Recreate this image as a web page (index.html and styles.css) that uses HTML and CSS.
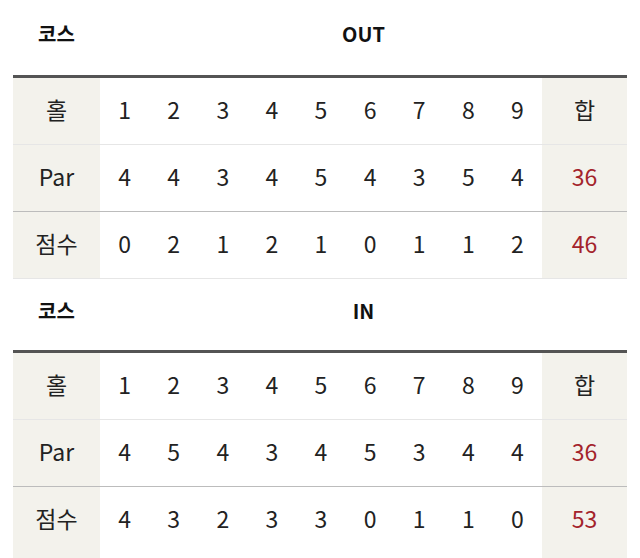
FILE: index.html
```html
<!DOCTYPE html>
<html lang="ko">
<head>
<meta charset="utf-8">
<link rel="stylesheet" href="styles.css">
</head>
<body>
<div class="page">
  <section class="course">
    <div class="course-head">
      <div class="course-label">코스</div>
      <div class="course-name">OUT</div>
    </div>
    <table class="score">
      <colgroup><col class="c-label"><col span="9" class="c-num"><col class="c-sum"></colgroup>
      <tr class="r-hole"><th>홀</th><td>1</td><td>2</td><td>3</td><td>4</td><td>5</td><td>6</td><td>7</td><td>8</td><td>9</td><th>합</th></tr>
      <tr class="r-par"><th>Par</th><td>4</td><td>4</td><td>3</td><td>4</td><td>5</td><td>4</td><td>3</td><td>5</td><td>4</td><th class="sum">36</th></tr>
      <tr class="r-score"><th>점수</th><td>0</td><td>2</td><td>1</td><td>2</td><td>1</td><td>0</td><td>1</td><td>1</td><td>2</td><th class="sum">46</th></tr>
    </table>
  </section>
  <section class="course">
    <div class="course-head">
      <div class="course-label">코스</div>
      <div class="course-name">IN</div>
    </div>
    <table class="score">
      <colgroup><col class="c-label"><col span="9" class="c-num"><col class="c-sum"></colgroup>
      <tr class="r-hole"><th>홀</th><td>1</td><td>2</td><td>3</td><td>4</td><td>5</td><td>6</td><td>7</td><td>8</td><td>9</td><th>합</th></tr>
      <tr class="r-par"><th>Par</th><td>4</td><td>5</td><td>4</td><td>3</td><td>4</td><td>5</td><td>3</td><td>4</td><td>4</td><th class="sum">36</th></tr>
      <tr class="r-score"><th>점수</th><td>4</td><td>3</td><td>2</td><td>3</td><td>3</td><td>0</td><td>1</td><td>1</td><td>0</td><th class="sum">53</th></tr>
    </table>
  </section>
</div>
</body>
</html>
```
FILE: styles.css
```css
html, body {
  margin: 0;
  padding: 0;
  background: #ffffff;
}
body {
  font-family: "Noto Sans CJK KR", "Noto Sans", sans-serif;
  color: #222222;
}
.page {
  padding: 2px 13px 0 13px;
}
.course-head {
  display: flex;
  height: 73px;
  align-items: flex-start;
  box-sizing: border-box;
}
.course-label,
.course-name {
  font-size: 20px;
  font-weight: 700;
  line-height: 28px;
  padding-top: 18px;
  color: #111111;
}
.course-label {
  width: 87px;
  text-align: center;
}
.course-name {
  flex: 1;
  text-align: center;
}
.course + .course .course-head {
  height: 71px;
}
.score {
  width: 614px;
  table-layout: fixed;
  border-collapse: collapse;
  border-top: 3px solid #545454;
}
.c-label { width: 87px; }
.c-sum { width: 85px; }
.score th,
.score td {
  height: 61px;
  padding: 0 0 5px 0;
  text-align: center;
  vertical-align: middle;
  font-size: 23px;
  font-weight: 400;
  line-height: 30px;
  border-bottom: 1px solid #e6e6e6;
}
.score th {
  background: #f3f2ec;
}
.score tr.r-par th,
.score tr.r-par td {
  border-bottom: 1px solid #bcbcbc;
}
.course + .course .r-score th,
.course + .course .r-score td {
  height: 62px;
  padding-bottom: 9px;
}
.score .sum {
  color: #a3232b;
}
```
